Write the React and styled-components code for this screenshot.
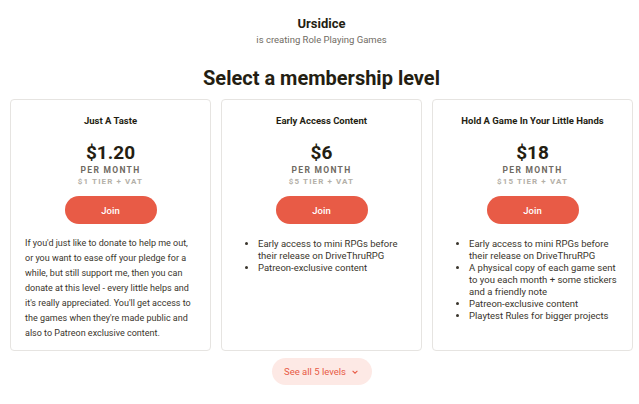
import React from "react";
import styled, { createGlobalStyle } from "styled-components";

const Global = createGlobalStyle`
  html, body { margin: 0; padding: 0; background: #fff; }
  body { font-family: Roboto, "Noto Sans", sans-serif; color: #241e12; }
  * { box-sizing: border-box; }
`;

const Page = styled.div`
  width: 639px;
  height: 404px;
  padding: 16px 6px 0 10px;
  display: flex;
  flex-direction: column;
  align-items: center;
  overflow: hidden;
`;

const Creator = styled.div`
  font-size: 13px;
  font-weight: 700;
  line-height: 16px;
`;

const Sub = styled.div`
  font-size: 9.5px;
  color: #706c64;
  line-height: 13px;
  margin-top: 1px;
`;

const Heading = styled.h1`
  margin: 20px 0 0;
  font-size: 20px;
  font-weight: 700;
  line-height: 24px;
`;

const Cards = styled.div`
  display: grid;
  grid-template-columns: repeat(3, 201px);
  gap: 10px;
  margin-top: 9px;
  width: 623px;
`;

const Card = styled.div`
  border: 1px solid #e6e4e1;
  border-radius: 4px;
  height: 252px;
  padding: 15px 14px 0;
  display: flex;
  flex-direction: column;
  align-items: center;
`;

const TierName = styled.div`
  font-size: 9.5px;
  font-weight: 700;
  line-height: 12px;
`;

const Price = styled.div`
  font-size: 19px;
  font-weight: 700;
  line-height: 24px;
  margin-top: 14px;
`;

const PerMonth = styled.div`
  font-size: 8.5px;
  font-weight: 700;
  letter-spacing: 1.3px;
  color: #6f6a62;
  margin-top: 0;
  line-height: 10px;
`;

const Vat = styled.div`
  font-size: 8px;
  font-weight: 700;
  letter-spacing: 1.1px;
  color: #b4b0a8;
  margin-top: 2px;
  line-height: 10px;
`;

const Join = styled.button`
  flex-shrink: 0;
  margin-top: 9px;
  width: 92px;
  height: 28px;
  border: none;
  border-radius: 14px;
  background: #e85b46;
  color: #fff;
  font-family: inherit;
  font-size: 9.5px;
  font-weight: 500;
`;

const Desc = styled.p`
  margin: 12px 0 0;
  font-size: 9px;
  line-height: 15px;
  color: #3a352c;
  align-self: stretch;
`;

const List = styled.ul`
  margin: 14px 0 0;
  padding-left: 22px;
  font-size: 9.5px;
  line-height: 12px;
  color: #3a352c;
  align-self: stretch;
  li { margin: 0; }
`;

const More = styled.button`
  margin-top: 7px;
  width: 100px;
  height: 27px;
  border: none;
  border-radius: 14px;
  background: #fde9e5;
  color: #e85b46;
  font-family: inherit;
  font-size: 9.5px;
  display: flex;
  align-items: center;
  justify-content: center;
  gap: 5px;
`;

const tiers = [
  {
    name: "Just A Taste",
    price: "$1.20",
    vat: "$1 TIER + VAT",
    desc: "If you'd just like to donate to help me out, or you want to ease off your pledge for a while, but still support me, then you can donate at this level - every little helps and it's really appreciated. You'll get access to the games when they're made public and also to Patreon exclusive content.",
  },
  {
    name: "Early Access Content",
    price: "$6",
    vat: "$5 TIER + VAT",
    list: [
      "Early access to mini RPGs before their release on DriveThruRPG",
      "Patreon-exclusive content",
    ],
  },
  {
    name: "Hold A Game In Your Little Hands",
    price: "$18",
    vat: "$15 TIER + VAT",
    list: [
      "Early access to mini RPGs before their release on DriveThruRPG",
      "A physical copy of each game sent to you each month + some stickers and a friendly note",
      "Patreon-exclusive content",
      "Playtest Rules for bigger projects",
    ],
  },
];

export default function App() {
  return (
    <>
      <Global />
      <Page>
        <Creator>Ursidice</Creator>
        <Sub>is creating Role Playing Games</Sub>
        <Heading>Select a membership level</Heading>
        <Cards>
          {tiers.map((t) => (
            <Card key={t.name}>
              <TierName>{t.name}</TierName>
              <Price>{t.price}</Price>
              <PerMonth>PER MONTH</PerMonth>
              <Vat>{t.vat}</Vat>
              <Join>Join</Join>
              {t.desc && <Desc>{t.desc}</Desc>}
              {t.list && (
                <List>
                  {t.list.map((l) => (
                    <li key={l}>{l}</li>
                  ))}
                </List>
              )}
            </Card>
          ))}
        </Cards>
        <More>
          See all 5 levels
          <svg width="8" height="8" viewBox="0 0 10 10" fill="none" stroke="#e85b46" strokeWidth="1.3">
            <path d="M2 3.5 L5 6.5 L8 3.5" />
          </svg>
        </More>
      </Page>
    </>
  );
}
